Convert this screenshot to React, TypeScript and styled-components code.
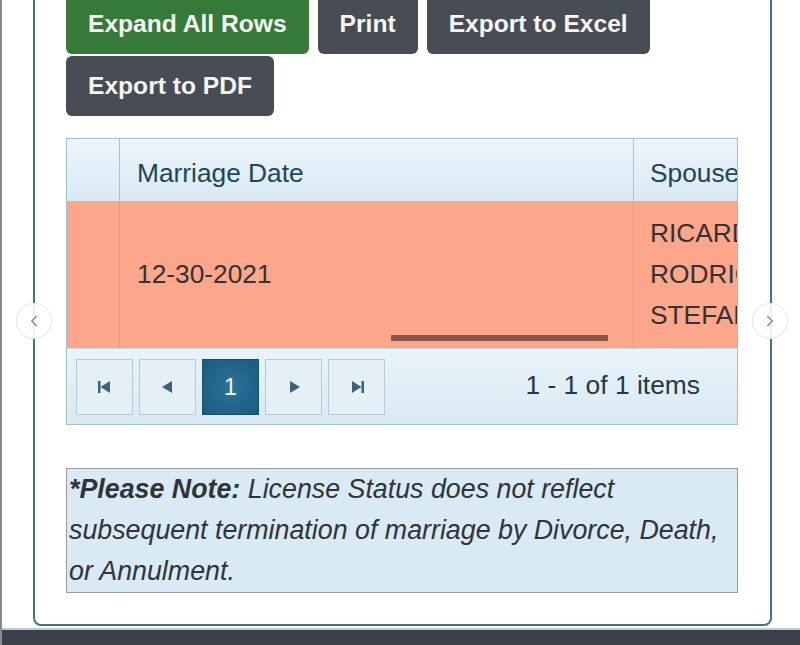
import React from "react";
import styled, { createGlobalStyle } from "styled-components";
import { ChevronLeft, ChevronRight } from "lucide-react";

const GlobalStyle = createGlobalStyle`
  html, body {
    margin: 0;
    padding: 0;
    background: #fff;
    overflow: hidden;
  }
  body {
    font-family: "Liberation Sans", Arial, Helvetica, sans-serif;
  }
`;

const Page = styled.div`
  position: relative;
  width: 800px;
  height: 645px;
  box-sizing: border-box;
  border-left: 2px solid #8a8a8a;
  overflow: hidden;
`;

const Card = styled.div`
  margin: -20px 0 0 31px;
  width: 739px;
  box-sizing: border-box;
  border: 2px solid #45708f;
  border-radius: 0 0 8px 8px;
  padding: 12px 32px 31px 31px;
  background: #fff;
`;

const ButtonBar = styled.div`
  display: flex;
  flex-wrap: wrap;
  gap: 2px 9px;
`;

const ActionButton = styled.button<{ $variant?: "green" | "dark" }>`
  height: 60px;
  padding: 0 22px;
  border: none;
  border-radius: 6px;
  background: ${(p) => (p.$variant === "green" ? "#357a39" : "#474c55")};
  color: #f3f6f3;
  font-family: "Liberation Sans", Arial, sans-serif;
  font-weight: bold;
  font-size: 24.6px;
  cursor: pointer;
`;

const Grid = styled.div`
  margin-top: 22px;
  border: 1px solid #a2bfcd;
  overflow: hidden;
`;

const GridRow = styled.div`
  position: relative;
  display: grid;
  grid-template-columns: 53px 514px 120px;
`;

const HeaderCell = styled.div<{ $last?: boolean }>`
  height: 63px;
  box-sizing: border-box;
  display: flex;
  align-items: center;
  padding: 7px 0 0 ${(p) => (p.$last ? "16px" : "17px")};
  border-right: ${(p) => (p.$last ? "none" : "1px solid #a9c2cf")};
  border-bottom: 1px solid #a9c2cf;
  background: linear-gradient(#edf5fb, #d9e9f4);
  color: #1d4656;
  font-size: 26.3px;
  white-space: nowrap;
  overflow: hidden;
`;

const BodyCell = styled.div<{ $last?: boolean }>`
  height: 144px;
  display: flex;
  flex-direction: column;
  justify-content: center;
  padding: 0 0 2px ${(p) => (p.$last ? "16px" : "17px")};
  border-right: ${(p) => (p.$last ? "none" : "1px solid #b9a7a0")};
  background: #fca78b;
  color: #333;
  font-size: 26.3px;
  line-height: 41px;
  white-space: nowrap;
  overflow: hidden;
`;

const ScrollThumb = styled.div`
  position: absolute;
  left: 324px;
  top: 133px;
  width: 217px;
  height: 6px;
  background: #8b5445;
`;

const Pager = styled.div`
  height: 76px;
  display: flex;
  align-items: flex-start;
  padding: 10px 37px 0 9px;
  border-top: 1px solid #c4d7e2;
  background: linear-gradient(#e9f3f9, #dbe9f3);
  box-sizing: border-box;
`;

const PageButtons = styled.div`
  display: flex;
  gap: 6px;
`;

const PageButton = styled.div<{ $active?: boolean }>`
  width: 57px;
  height: 56px;
  box-sizing: border-box;
  display: flex;
  align-items: center;
  justify-content: center;
  border: 1px solid ${(p) => (p.$active ? "#15506f" : "#b4cad6")};
  background: ${(p) =>
    p.$active ? "radial-gradient(#2b7299, #1a5b80)" : "#e5eff6"};
  color: #eef5f9;
  font-size: 24px;
`;

const PageInfo = styled.div`
  margin-left: auto;
  align-self: center;
  margin-top: -12px;
  color: #1e3a44;
  font-size: 26.4px;
`;

const Note = styled.div`
  margin-top: 43px;
  border: 1px solid #9a9a9a;
  background: #d9eaf5;
  padding: 0 2px;
  color: #2f3439;
  font-size: 26.8px;
  font-style: italic;
  line-height: 41px;
`;

const Footer = styled.div`
  margin-top: 2px;
  height: 16px;
  border-top: 2px solid #b3cde0;
  background: #3b3f47;
`;

const NavArrow = styled.div<{ $side: "left" | "right" }>`
  position: absolute;
  top: 303px;
  ${(p) => (p.$side === "left" ? "left: 14px;" : "left: 750px;")}
  width: 34px;
  height: 34px;
  border-radius: 50%;
  background: rgba(255, 255, 255, 0.9);
  border: 1px solid #e4e4e4;
  display: flex;
  align-items: center;
  justify-content: center;
  color: #8a8a8a;
`;

const PagerIcon = ({ kind }: { kind: "first" | "prev" | "next" | "last" }) => {
  const fill = "#3f6173";
  return (
    <svg width="20" height="20" viewBox="0 0 20 20">
      {kind === "first" && (
        <>
          <rect x="3" y="4" width="2.5" height="12" fill={fill} />
          <path d="M5.5 10 L15 4 L15 16 Z" fill={fill} />
        </>
      )}
      {kind === "prev" && <path d="M4 10 L14 4 L14 16 Z" fill={fill} />}
      {kind === "next" && <path d="M16 10 L6 4 L6 16 Z" fill={fill} />}
      {kind === "last" && (
        <>
          <path d="M14.5 10 L5 4 L5 16 Z" fill={fill} />
          <rect x="14.5" y="4" width="2.5" height="12" fill={fill} />
        </>
      )}
    </svg>
  );
};

export default function App() {
  return (
    <Page>
      <GlobalStyle />
      <Card>
        <ButtonBar>
          <ActionButton $variant="green">Expand All Rows</ActionButton>
          <ActionButton>Print</ActionButton>
          <ActionButton>Export to Excel</ActionButton>
          <ActionButton>Export to PDF</ActionButton>
        </ButtonBar>
        <Grid>
          <GridRow>
            <HeaderCell />
            <HeaderCell>Marriage Date</HeaderCell>
            <HeaderCell $last>Spouse Name</HeaderCell>
          </GridRow>
          <GridRow>
            <BodyCell />
            <BodyCell>12-30-2021</BodyCell>
            <BodyCell $last>
              <span>RICARDO</span>
              <span>RODRIGUEZ</span>
              <span>STEFANY</span>
            </BodyCell>
            <ScrollThumb />
          </GridRow>
          <Pager>
            <PageButtons>
              <PageButton>
                <PagerIcon kind="first" />
              </PageButton>
              <PageButton>
                <PagerIcon kind="prev" />
              </PageButton>
              <PageButton $active>1</PageButton>
              <PageButton>
                <PagerIcon kind="next" />
              </PageButton>
              <PageButton>
                <PagerIcon kind="last" />
              </PageButton>
            </PageButtons>
            <PageInfo>1 - 1 of 1 items</PageInfo>
          </Pager>
        </Grid>
        <Note>
          <b>*Please Note:</b> License Status does not reflect subsequent
          termination of marriage by Divorce, Death, or Annulment.
        </Note>
      </Card>
      <Footer />
      <NavArrow $side="left">
        <ChevronLeft size={18} strokeWidth={2} />
      </NavArrow>
      <NavArrow $side="right">
        <ChevronRight size={18} strokeWidth={2} />
      </NavArrow>
    </Page>
  );
}
